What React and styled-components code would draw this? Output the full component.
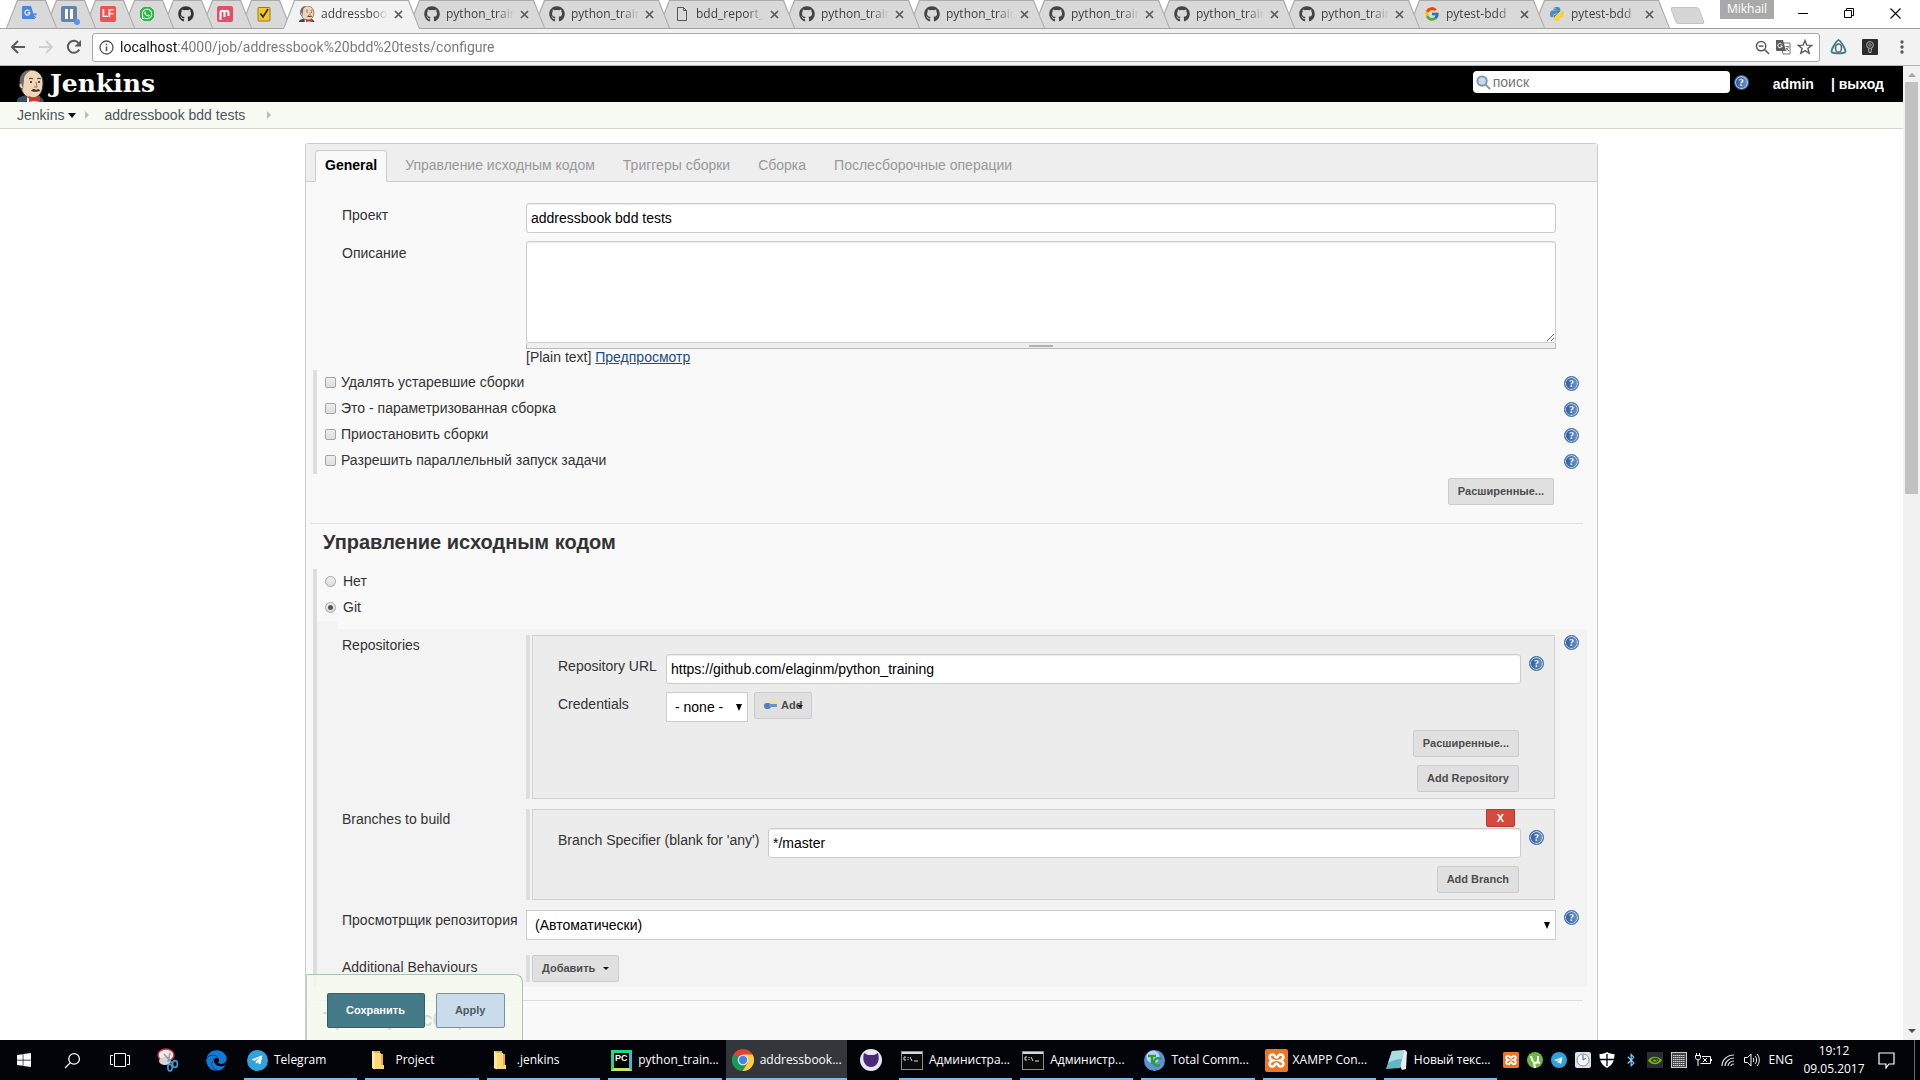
import React from "react";
import styled, { createGlobalStyle, css } from "styled-components";
import {
  FaGithub,
  FaWhatsapp,
  FaTelegramPlane,
  FaPython,
  FaWindows,
  FaEdge,
  FaBluetoothB,
} from "react-icons/fa";
import { FcGoogle } from "react-icons/fc";

const pageFont = '"Liberation Sans", Arial, Helvetica, sans-serif';
const uiFont = '"Open Sans", "Noto Sans", "Segoe UI", sans-serif';

const GlobalStyle = createGlobalStyle`
  * { box-sizing: border-box; }
  body { margin: 0; background: #fff; overflow: hidden; }
  button, input, select, textarea { font: inherit; margin: 0; }
  button { cursor: pointer; }
  svg { display: block; flex: none; }
`;

const Screen = styled.div`
  display: flex;
  flex-direction: column;
  height: 100vh;
  overflow: hidden;
`;

/* ---------- browser chrome ---------- */

const TabStrip = styled.div`
  display: flex;
  align-items: flex-end;
  height: 29px;
  padding-left: 6px;
  background: #fff;
  border-bottom: 1px solid #a3a3a3;
  font: 12px/16px ${uiFont};
`;

const TabGroup = styled.div`
  display: flex;
  align-items: flex-end;
  padding-right: ${(p) => p.$gap || 0}px;
`;

const Tab = styled.div`
  position: relative;
  z-index: ${(p) => p.$order};
  display: flex;
  align-items: center;
  gap: 6px;
  width: ${(p) => (p.$pinned ? 51 : 137)}px;
  height: ${(p) => (p.$active ? 29 : 28)}px;
  margin: 0 -12px ${(p) => (p.$active ? -1 : 0)}px 0;
  padding: ${(p) => (p.$active ? "0 17px 1px 16px" : "0 16px 0 16px")};
  &::before,
  &::after {
    content: "";
    position: absolute;
    z-index: -1;
    inset: 0;
    background: #ababab;
    clip-path: polygon(0 100%, 11px 0, calc(100% - 11px) 0, 100% 100%);
  }
  &::after {
    inset: 1px 1px 0 1px;
    background: ${(p) => (p.$active ? "#f2f2f2" : "#d9d9d9")};
  }
`;

const TabTitle = styled.span`
  flex: 1;
  min-width: 0;
  white-space: nowrap;
  color: #3f3f3f;
  mask-image: linear-gradient(90deg, #000 75%, transparent);
`;

const PlainButton = styled.button`
  display: grid;
  place-items: center;
  padding: 0;
  border: 0;
  background: none;
  color: ${(p) => p.$color || "#5a5a5a"};
`;

const PinnedTile = styled.span`
  position: relative;
  display: grid;
  place-items: center;
  width: 16px;
  height: 16px;
  border-radius: 2px;
  background: ${(p) => p.$bg || "none"};
  color: #fff;
  font: bold 10px/16px ${pageFont};
`;

const Dot = styled.i`
  position: absolute;
  right: -3px;
  bottom: -3px;
  width: 6px;
  height: 6px;
  border-radius: 50%;
  background: #5b93ee;
`;

const NewTab = styled.button`
  align-self: center;
  width: 29px;
  height: 17px;
  margin: 3px 0 0 15px;
  padding: 0;
  border: 1px solid #c4c4c4;
  border-radius: 3px;
  background: #d6d6d6;
  transform: skewX(20deg);
`;

const WindowControls = styled.div`
  display: flex;
  align-self: flex-start;
  margin: 0 2px 0 auto;
  color: #000;
`;

const Profile = styled.span`
  width: 54px;
  height: 19px;
  margin-right: 6px;
  background: #a9a9a9;
  color: #fff;
  text-align: center;
  line-height: 18px;
`;

const WindowButton = styled(PlainButton)`
  width: 46px;
  height: 26px;
  color: #000;
`;

const Toolbar = styled.div`
  display: flex;
  align-items: center;
  height: 37px;
  padding: 0 4px;
  background: #f2f2f2;
  border-bottom: 1px solid #b5b5b5;
`;

const NavButton = styled(PlainButton)`
  width: 28px;
  height: 28px;
`;

const Omnibox = styled.div`
  flex: 1;
  display: flex;
  align-items: center;
  gap: 6px;
  height: 29px;
  margin-left: 4px;
  padding: 0 6px;
  border: 1px solid #a8a8a8;
  border-radius: 3px;
  background: #fff;
`;

const Address = styled.input`
  flex: 1;
  min-width: 0;
  padding: 0;
  border: 0;
  outline: 0;
  font: 14px/20px Roboto, ${uiFont};
  color: #767676;
  background: linear-gradient(90deg, #111 57px, #767676 57px);
  background-clip: text;
  -webkit-text-fill-color: transparent;
`;

const ExtButton = styled(PlainButton)`
  width: 28px;
  height: 28px;
  margin-left: 4px;
`;

/* ---------- viewport ---------- */

const Viewport = styled.div`
  flex: 1;
  min-height: 0;
  display: flex;
`;

const Page = styled.div`
  position: relative;
  flex: 1;
  min-width: 0;
  overflow: hidden;
  background: #fff;
  font: 14px/16px ${pageFont};
  color: #333;
`;

const Scroll = styled.div`
  display: flex;
  flex-direction: column;
  align-items: center;
  justify-content: space-between;
  width: 17px;
  padding: 7px 0;
  background: #f1f1f1;
`;

const ScrollArrow = styled.i`
  border: 4px solid transparent;
  ${(p) =>
    p.$up
      ? css`
          border-top: 0;
          border-bottom-color: #a3a3a3;
        `
      : css`
          border-bottom: 0;
          border-top-color: #505050;
        `}
`;

const ScrollTrack = styled.div`
  flex: 1;
  width: 13px;
  padding-top: 5px;
`;

const ScrollThumb = styled.div`
  height: 412px;
  background: #c1c1c1;
`;

/* ---------- Jenkins header ---------- */

const Header = styled.header`
  display: flex;
  align-items: center;
  height: 36px;
  padding: 0 19px 0 17px;
  background: #000;
`;

const Logo = styled.a`
  display: flex;
  align-items: flex-end;
  gap: 5px;
  height: 36px;
  color: #fff;
  text-decoration: none;
  font: bold 25px/36px "DejaVu Serif", Georgia, serif;
`;

const SearchForm = styled.form`
  display: flex;
  align-items: center;
  gap: 4px;
  margin: 0 24px 4px auto;
`;

const SearchBox = styled.div`
  display: flex;
  align-items: center;
  gap: 2px;
  width: 257px;
  height: 22px;
  padding: 0 3px;
  border-radius: 4px;
  background: #fff;
`;

const SearchInput = styled.input`
  flex: 1;
  min-width: 0;
  padding: 0;
  border: 0;
  outline: 0;
  background: none;
  &::placeholder {
    color: #757575;
  }
`;

const UserLinks = styled.nav`
  display: flex;
  gap: 17px;
  font-weight: bold;
  color: #fff;
  a {
    color: #fff;
    text-decoration: none;
  }
`;

const Breadcrumbs = styled.nav`
  display: flex;
  align-items: center;
  height: 27px;
  padding-left: 17px;
  border-bottom: 1px solid #d3d7cf;
  background: #f6faf2;
  a {
    color: #4d545d;
    text-decoration: none;
  }
`;

const Caret = styled.i`
  display: inline-block;
  margin-left: 4px;
  border: solid transparent;
  border-width: ${(p) => (p.$small ? "3px 3px 0" : "5px 4px 0")};
  border-top-color: #111;
`;

const CrumbArrow = styled.i`
  margin: 0 ${(p) => p.$after || 0}px 0 ${(p) => p.$before}px;
  border: 4px solid transparent;
  border-right: 0;
  border-left-color: #babdb6;
`;

/* ---------- configuration form ---------- */

const Config = styled.main`
  width: calc(100% - 32px);
  max-width: 1293px;
  margin: 14px auto 0;
  border: 1px solid #ccc;
  border-radius: 3px 3px 0 0;
  background: #f9f9f9;
`;

const Tabs = styled.div`
  display: flex;
  align-items: flex-end;
  gap: 8px;
  height: 38px;
  padding-left: 9px;
  border-bottom: 1px solid #ccc;
  background: #eee;
`;

const ConfigTab = styled.button`
  height: 32px;
  margin-bottom: -1px;
  padding: 0 9px 2px;
  border: 1px solid transparent;
  border-radius: 4px 4px 0 0;
  background: none;
  color: #999;
  white-space: nowrap;
  ${(p) =>
    p.$active &&
    css`
      border-color: #ccc;
      border-bottom-color: #f9f9f9;
      background: #f9f9f9;
      color: #000;
      font-weight: bold;
    `}
`;

const Rows = styled.div`
  display: grid;
  gap: 8px;
  padding: 21px 41px 5px 36px;
`;

const Label = styled.label`
  display: block;
  padding-top: 4px;
  white-space: nowrap;
`;

const Row = styled.div`
  display: grid;
  grid-template-columns: 184px minmax(0, 1fr) ${(p) => (p.$help ? "31px" : "0")};
  align-items: start;
  margin-top: ${(p) => p.$space || 0}px;
  > ${Label} {
    padding-top: ${(p) => (p.$help && !p.$space ? 2 : 4)}px;
  }
`;

const fieldBox = css`
  width: 100%;
  border: 1px solid #ccc;
  border-radius: 3px;
  background: #fff;
  color: #000;
  outline: 0;
`;

const TextInput = styled.input`
  ${fieldBox}
  display: block;
  height: 30px;
  padding: 0 4px;
  box-shadow: inset 0 1px 1px rgba(0, 0, 0, 0.08);
`;

const TextArea = styled.textarea`
  ${fieldBox}
  display: block;
  height: 102px;
  padding: 5px;
  resize: vertical;
  box-shadow: inset 0 1px 1px rgba(0, 0, 0, 0.08);
`;

const Grip = styled.div`
  display: grid;
  place-items: center;
  height: 6px;
  border: 1px solid #bbb;
  border-top: 0;
  background: #eee;
  &::after {
    content: "";
    width: 24px;
    height: 2px;
    background: #b0b0b0;
  }
`;

const Note = styled.div`
  color: #333;
  a {
    color: #204a87;
  }
`;

const OptionBlock = styled.div`
  margin: 0 0 0 7px;
  border-left: 4px solid #ddd;
`;

const Option = styled.div`
  display: flex;
  align-items: center;
  height: 26px;
  padding: 0 18px 0 8px;
  label {
    flex: 1;
    padding-left: ${(p) => p.$gap}px;
    margin-bottom: 3px;
  }
`;

const Tick = styled.input`
  appearance: none;
  display: grid;
  place-items: center;
  width: 11px;
  height: 11px;
  margin-bottom: 2px;
  border: 1px solid #a5a5a5;
  border-radius: ${(p) => (p.type === "radio" ? "50%" : "2px")};
  background: linear-gradient(#eee, #ddd);
  &:checked::after {
    content: "";
    width: 5px;
    height: 5px;
    border-radius: 50%;
    background: #555;
  }
`;

const HelpButton = styled.button`
  display: grid;
  place-items: center;
  width: 15px;
  height: 15px;
  margin-left: ${(p) => p.$indent || 0}px;
  padding: 0;
  border: 1px solid #3565a5;
  border-radius: 50%;
  background: linear-gradient(90deg, #2d5796, #6f97cb);
  box-shadow: inset 0 0 0 1px #c4d6ee;
  color: #fff;
  font: bold 10px/13px "Liberation Serif", serif;
`;

const Actions = styled.div`
  display: flex;
  justify-content: flex-end;
  padding: ${(p) => (p.$outer ? "4px 43px 18px 0" : "0 2px 0 0")};
`;

const Button = styled.button`
  position: relative;
  display: inline-flex;
  align-items: center;
  gap: 4px;
  height: 27px;
  padding: 0 9px 1px;
  border: 1px solid #ccc;
  border-radius: 2px;
  background: #e0e0e0;
  color: #4d4d4d;
  font: bold 11px/14px ${pageFont};
  white-space: nowrap;
`;

const OverCaret = styled.span`
  position: absolute;
  right: 8px;
  top: 11px;
  line-height: 0;
`;

const Heading = styled.h2`
  margin: ${(p) => p.$space || 0}px 14px 0 4px;
  padding: 7px 0 0 13px;
  height: 46px;
  border-top: 1px solid #ddd;
  font: bold 20px/22px ${pageFont};
  color: #333;
`;

const Notch = styled.div`
  width: 21px;
  height: 8px;
  background: #f3f3f3;
`;

const GitPanel = styled.div`
  display: grid;
  gap: 10px;
  margin-right: 10px;
  padding: 6px 0 5px 25px;
  background: #f3f3f3;
`;

const Chunk = styled.div`
  margin-right: 1px;
  padding-left: 2px;
  border-left: 4px solid #ddd;
`;

const ChunkBox = styled.div`
  position: relative;
  display: grid;
  gap: 8px;
  padding: 18px 33px 6px 25px;
  border: 1px solid #d0d0d0;
  background: #ececec;
`;

const SubRow = styled.div`
  display: grid;
  grid-template-columns: ${(p) => p.$label}px minmax(0, 1fr) 15px;
  align-items: start;
  margin-right: -23px;
  ${HelpButton} {
    margin-top: 2px;
  }
`;

const SubField = styled.div`
  display: flex;
  align-items: flex-start;
  gap: 6px;
  margin-right: 8px;
`;

const DeleteButton = styled.button`
  position: absolute;
  top: -1px;
  right: 39px;
  width: 29px;
  height: 18px;
  padding: 0;
  border: 1px solid #b93a2e;
  border-radius: 0 0 2px 2px;
  background: #d54a3d;
  color: #fff;
  font: bold 11px/14px ${pageFont};
`;

const SelectWrap = styled.div`
  position: relative;
  flex: ${(p) => (p.$width ? "none" : 1)};
  width: ${(p) => (p.$width ? p.$width + "px" : "100%")};
  &::after {
    content: "";
    position: absolute;
    right: 6px;
    top: 12px;
    border: 3px solid transparent;
    border-top: 7px solid #000;
    border-bottom: 0;
    pointer-events: none;
  }
`;

const Select = styled.select`
  ${fieldBox}
  appearance: none;
  display: block;
  height: 30px;
  padding: 0 8px;
  border-radius: 0;
`;

const SaveBar = styled.div`
  position: absolute;
  left: 306px;
  bottom: 0;
  display: flex;
  gap: 11px;
  padding: 18px 17px 12px 20px;
  border: 1px solid #a9c4b4;
  border-left-color: #ccc;
  border-bottom: 0;
  border-radius: 0 8px 0 0;
  background: rgba(245, 249, 239, 0.85);
`;

const BarButton = styled.button`
  height: 35px;
  padding: 0 19px 1px 18px;
  border: 1px solid ${(p) => (p.$primary ? "#2f5f6d" : "#6f93b8")};
  border-radius: 2px;
  background: ${(p) => (p.$primary ? "#457a88" : "#cadcec")};
  color: ${(p) => (p.$primary ? "#fff" : "#4d5a66")};
  font: bold 11px/14px ${pageFont};
`;

/* ---------- taskbar ---------- */

const Taskbar = styled.footer`
  display: flex;
  height: 40px;
  background: #02040a;
  color: #fff;
  font: 12px/18px ${uiFont};
`;

const TaskIcon = styled(PlainButton)`
  flex: none;
  width: 48px;
  color: #fff;
`;

const TaskGroup = styled.div`
  display: flex;
  flex: 0 1 ${(p) => p.$width}px;
  min-width: 0;
`;

const Task = styled.button`
  position: relative;
  flex: 1;
  min-width: 0;
  display: flex;
  align-items: center;
  gap: 6px;
  padding: 0 7px 0 6px;
  border: 0;
  background: ${(p) => (p.$active ? "#33363b" : "none")};
  color: #fff;
  white-space: nowrap;
  &::after {
    content: "";
    position: absolute;
    left: ${(p) => (p.$active ? 0 : 4)}px;
    right: ${(p) => (p.$active ? 0 : 4)}px;
    bottom: 0;
    height: 2px;
    background: #76b9ed;
  }
`;

const IconSlot = styled.span`
  display: grid;
  place-items: center;
  flex: none;
  width: 22px;
`;

const Tray = styled.div`
  display: flex;
  align-items: center;
  gap: 8px;
  margin-left: auto;
  padding-right: 5px;
`;

const TraySlot = styled.span`
  display: grid;
  place-items: center;
  width: 16px;
  height: 16px;
`;

const Clock = styled.time`
  width: 66px;
  text-align: center;
`;

const Notifications = styled(PlainButton)`
  width: 40px;
  height: 40px;
  border-right: 1px solid #6b6d70;
  padding-right: 16px;
  color: #fff;
`;

/* ---------- drawings ---------- */

const Cross = () => (
  <svg width="9" height="9" viewBox="0 0 9 9" stroke="currentColor" strokeWidth="1.7">
    <path d="M1 1l7 7M8 1l-7 7" />
  </svg>
);

const Butler = ({ w = 16, h = 16 }) => (
  <svg width={w} height={h} viewBox="0 0 28 32" preserveAspectRatio="none">
    <path d="M0 32c0-3 1-5 6-6l8-1c6 0 12 1 13 7z" fill="#335061" />
    <path d="M10 23h10l2 9H10z" fill="#fff" />
    <path d="M3 13C2 4 8 0 14 0s12 4 12 13c0 9-4 15-11 15S4 22 3 13z" fill="#f0d6b7" stroke="#40332d" strokeWidth="1" />
    <path d="M3 14C2 5 7 1 14 .5 9 3 7 6 7 10l-1 9z" fill="#6d6b6d" />
    <path d="M4 13c-3 0-2 6 2 6" fill="#f0d6b7" stroke="#40332d" />
    <path d="M12 9c1-1 3-1 4 0M20 9c1-1 3-1 4 0" stroke="#40332d" fill="none" />
    <circle cx="14" cy="12" r="1" fill="#222" />
    <circle cx="22" cy="12" r="1" fill="#222" />
    <path d="M19 12l1 5h-3" stroke="#a06a50" fill="none" />
    <path d="M14 21c2-3 4-2 5-1 1-1 4-1 4 1-2 1-7 1-9 0z" fill="#40332d" />
    <path d="M12 26l5 2 6-2v6l-6-1-5 1z" fill="#d33833" />
  </svg>
);

const Arrow = ({ flip }) => (
  <svg width="16" height="14" viewBox="0 0 16 14" fill="none" stroke="currentColor" strokeWidth="2">
    <path d={flip ? "M1 7h13M8 1l6 6-6 6" : "M15 7H2M8 1L2 7l6 6"} />
  </svg>
);

const Reload = () => (
  <svg width="16" height="16" viewBox="0 0 16 16">
    <path d="M13.2 10.5A6 6 0 1 1 12.5 4" fill="none" stroke="currentColor" strokeWidth="2" />
    <path d="M15 1v6.500H8.500z" fill="currentColor" />
  </svg>
);

const Info = () => (
  <svg width="15" height="15" viewBox="0 0 15 15">
    <circle cx="7.5" cy="7.5" r="6.500" fill="none" stroke="#555" strokeWidth="1.3" />
    <path d="M6.700 6.500h1.600V11H6.700zM6.700 3.700h1.600v1.600H6.700z" fill="#555" />
  </svg>
);

const Translate = () => (
  <svg width="15" height="15" viewBox="0 0 15 15">
    <path d="M5 3h9v11H7z" fill="#fff" stroke="#777" />
    <path d="M0 0h7l3 11H1a1 1 0 0 1-1-1z" fill="#5c5c5c" />
    <path d="M6 4.500A2.200 2.200 0 1 0 6.200 6H4.300" fill="none" stroke="#fff" />
    <path d="M9.500 6.500h4M12.500 6.500c-.5 2-1.500 3-3 4.500M10 8l3 3" stroke="#777" fill="none" />
  </svg>
);

const GTranslate = () => (
  <svg width="16" height="16" viewBox="0 0 16 16">
    <path d="M6 5h9a1 1 0 0 1 1 1v9a1 1 0 0 1-1 1H9z" fill="#d5dbe6" />
    <path d="M1 0h8l4 13H1a1 1 0 0 1-1-1V1a1 1 0 0 1 1-1z" fill="#4a86e8" />
    <path d="M7.500 5.200a2.500 2.500 0 1 0 .4 1.600H5.600" stroke="#fff" fill="none" strokeWidth="1.1" />
    <path d="M10 8h5M13.500 8c-.5 2-1 3-2.500 4M12 9.500l2 2.500" stroke="#5d7fb5" fill="none" />
  </svg>
);

const Magnifier = ({ size = 16, minus, color = "#5a5a5a", flip, fill = "none", width = 1.6 }) => (
  <svg width={size} height={size} viewBox="0 0 16 16" fill="none" stroke={color} strokeWidth={width}>
    <g transform={flip ? "matrix(-1 0 0 1 16 0)" : undefined}>
      <circle cx="6.500" cy="6.500" r="5" fill={fill} />
      <path d="M10 10l5 5" />
      {minus && <path d="M4 6.500h5" />}
    </g>
  </svg>
);

const Star = () => (
  <svg width="16" height="16" viewBox="0 0 16 16" fill="none" stroke="#5a5a5a" strokeWidth="1.4">
    <path d="M8 1.500l1.800 4.600 4.900.3-3.800 3.100 1.300 4.800L8 11.600l-4.200 2.700 1.300-4.800L1.300 6.400l4.900-.3z" />
  </svg>
);

const ExtTriangle = () => (
  <svg width="17" height="16" viewBox="0 0 17 16" fill="none">
    <path d="M8.500 1C11 2 15.500 10 15.500 12.500 15 15 2 15 1.500 12.500 1.500 10 6 2 8.500 1z" stroke="#2f8196" strokeWidth="1.8" />
    <ellipse cx="8.500" cy="9" rx="3" ry="4.200" stroke="#6a6f75" strokeWidth="1.700" />
  </svg>
);

const ExtBulb = () => (
  <svg width="16" height="16" viewBox="0 0 16 16" fill="none">
    <rect width="16" height="16" rx="1" fill="#2c2c2c" />
    <circle cx="8" cy="6" r="3.400" stroke="#cfcfcf" strokeWidth=".8" />
    <circle cx="8" cy="6" r="1.300" stroke="#aaa" strokeWidth=".8" />
    <path d="M6.500 9.500l.5 4h2l.5-4" stroke="#cfcfcf" strokeWidth=".8" />
  </svg>
);

const PageIcon = () => (
  <svg width="16" height="16" viewBox="0 0 16 16" fill="none" stroke="#555">
    <path d="M3.500 1.500h6l3 3v10h-9zM9.500 1.500v3h3" />
  </svg>
);

const PythonBox = styled.span`
  display: flex;
  align-items: center;
  width: 16px;
  height: 16px;
`;

const PythonMark = () => (
  <PythonBox>
    <svg width="0" height="0" aria-hidden="true">
      <defs>
        <linearGradient id="py" x1="0" y1="0" x2="1" y2="1">
          <stop offset=".5" stopColor="#4b8bc0" />
          <stop offset=".5" stopColor="#f7cf3f" />
        </linearGradient>
      </defs>
    </svg>
    <FaPython size={16} fill="url(#py)" />
  </PythonBox>
);

const Pause = () => (
  <svg width="8" height="10" viewBox="0 0 8 10" fill="#fff">
    <path d="M0 0h3v10H0zM5 0h3v10H5z" />
  </svg>
);

const Mobi = () => (
  <svg width="12" height="12" viewBox="0 0 12 12" fill="none" stroke="#fff" strokeWidth="2">
    <path d="M1.500 12V5c0-3 4-3 4 0v4V5c0-3 4-3 4 0v3" />
  </svg>
);

const CheckTile = () => (
  <svg width="14" height="16" viewBox="0 0 14 16">
    <rect x="1" y="1.500" width="12" height="13.500" rx="1" fill="#f6c92b" stroke="#8c7a35" />
    <path d="M3.500 7.500l2.500 3.500 5-8" fill="none" stroke="#333" strokeWidth="1.800" />
  </svg>
);

const KeyIcon = () => (
  <svg width="13" height="13" viewBox="0 0 13 13">
    <circle cx="9.500" cy="4" r="3" fill="#f1e58b" />
    <rect x="0" y="4" width="7" height="6" rx="3" fill="#4f7fb5" />
    <path d="M5 5h8v3H5z" fill="#6d93bf" />
  </svg>
);

const Folder = () => (
  <svg width="14" height="20" viewBox="0 0 14 20">
    <path d="M1 1h8v3h3v15H3L1 18z" fill="#e3b04b" />
    <path d="M1 1l3 2v16.500L1 18z" fill="#ffe9a2" />
    <path d="M4 3h6v12l3 0v4H4z" fill="#fbd873" />
  </svg>
);

const Snip = () => (
  <svg width="24" height="24" viewBox="0 0 24 24" fill="none">
    <ellipse cx="10" cy="7" rx="8" ry="6" fill="#f3e9ea" stroke="#c5333c" strokeWidth="1.500" />
    <ellipse cx="9" cy="13" rx="6" ry="4" fill="#d9d4d8" />
    <path d="M8 6l8 9M14 5l-2 9" stroke="#8b98a8" strokeWidth="1.500" />
    <ellipse cx="19" cy="16" rx="2.400" ry="3.400" stroke="#3f9bd8" strokeWidth="1.600" />
    <ellipse cx="14" cy="19.500" rx="2.200" ry="3.400" stroke="#3f9bd8" strokeWidth="1.600" />
  </svg>
);

const TaskView = () => (
  <svg width="20" height="16" viewBox="0 0 20 16" fill="none" stroke="#fff">
    <path d="M4.500 1.500h11v13h-11zM3 3.500H.5v9H3M17 3.500h2.500v9H17" />
  </svg>
);

const Disc = styled.span`
  display: grid;
  place-items: center;
  width: ${(p) => p.$size}px;
  height: ${(p) => p.$size}px;
  border-radius: 50%;
  background: ${(p) => p.$bg};
  color: #fff;
`;

const PyCharm = styled.span`
  display: grid;
  width: 21px;
  height: 21px;
  border: 3px solid #21d789;
  border-right-color: #41b7d8;
  border-bottom-color: #c9e65a;
  background: #000;
  color: #fff;
  font: bold 9px/10px ${pageFont};
  text-align: center;
`;

const Chrome = () => (
  <svg width="22" height="22" viewBox="0 0 22 22">
    <circle cx="11" cy="11" r="11" fill="#db4437" />
    <path d="M11 11L1.500 5.500A11 11 0 0 0 10.500 22l5-8.500z" fill="#0f9d58" />
    <path d="M11 5.500h9.500A11 11 0 0 1 10.500 22l5.500-8.500z" fill="#ffcd40" />
    <circle cx="11" cy="11" r="5.300" fill="#f1f1f1" />
    <circle cx="11" cy="11" r="4.200" fill="#4285f4" />
  </svg>
);

const GitHubDesktop = () => (
  <svg width="22" height="22" viewBox="0 0 22 22">
    <circle cx="11" cy="11" r="11" fill="#e9e6f2" />
    <path d="M4 4l4 2h6l4-2c1 4 1 6 0 9-1 3-4 5-7 5s-6-2-7-5c-1-3-1-5 0-9z" fill="#4b2a78" />
  </svg>
);

const Console = () => (
  <svg width="22" height="19" viewBox="0 0 22 19">
    <rect x=".5" y=".5" width="21" height="18" fill="#0a0a0a" stroke="#8c8c8c" />
    <rect x="1" y="1" width="20" height="2" fill="#d9d9d9" />
    <path d="M5 6H3v3h2M7 6v1M7 8v1M9 6l2 4M13 10h4" stroke="#ddd" fill="none" />
  </svg>
);

const TotalCmd = () => (
  <svg width="21" height="21" viewBox="0 0 21 21">
    <circle cx="10.500" cy="10.500" r="10.500" fill="#5b93d6" />
    <circle cx="9" cy="7" r="6.500" fill="#d3e6f8" opacity=".8" />
    <path d="M4 6h8M8 6v8M17 9c-4-2-7 0-7 3.500s4 4 6 2" stroke="#2f9b3c" strokeWidth="2.400" fill="none" />
  </svg>
);

const Xampp = ({ size = 23 }) => (
  <svg width={size} height={size} viewBox="0 0 23 23">
    <rect width="23" height="23" rx="2" fill="#ee7623" />
    <path
      d="M8 11.500C3 10 4 5 8 5.500c2 .3 2 3 3.500 3s1.500-2.700 3.500-3c4-.5 5 4.500 0 6 5 1.500 4 6.500 0 6-2-.3-2-3-3.500-3s-1.500 2.700-3.500 3c-4 .5-5-4.500 0-6z"
      fill="none"
      stroke="#fff"
      strokeWidth="2.600"
    />
  </svg>
);

const Notepad = () => (
  <svg width="22" height="22" viewBox="0 0 22 22">
    <path d="M6 2l13-1 2 2-1 17-4 1z" fill="#e8eef0" />
    <path d="M6 2l12 0-4 17-14 1z" fill="#5fb8c4" />
    <path d="M6 2l12 0-2 8C10 10 6 12 2 14z" fill="#a8dde2" />
  </svg>
);

const Utorrent = () => (
  <svg width="16" height="16" viewBox="0 0 16 16">
    <circle cx="8" cy="8" r="8" fill="#6fb63e" />
    <path d="M4 4c1 4 1 6 4 7 2 0 3-1 3-3V4M11 8c0 3 1 3 2 3M7 11l1 5" stroke="#fff" strokeWidth="2" fill="none" />
  </svg>
);

const Dial = () => (
  <svg width="16" height="16" viewBox="0 0 16 16">
    <rect width="16" height="16" rx="2" fill="#dfe3e8" />
    <circle cx="8" cy="8" r="6" fill="#f6f8fa" stroke="#7b8ea8" />
    <path d="M8 8V3M8 8l3-2" stroke="#2d62b5" />
  </svg>
);

const Shield = () => (
  <svg width="16" height="16" viewBox="0 0 16 16">
    <path d="M8 0c2 1.500 5 2 7.500 2 0 7-2 11-7.500 14C2.500 13 .5 9 .5 2 3 2 6 1.500 8 0z" fill="#fff" />
    <path d="M8 2v12M1 7.500h14" stroke="#02040a" strokeWidth="1.300" />
  </svg>
);

const Nvidia = () => (
  <svg width="16" height="16" viewBox="0 0 16 16">
    <rect width="16" height="16" fill="#2b2f33" />
    <path d="M1 8.500C3 4 10 3 15 8c-4 6-11 5-14 .5z" fill="#76b900" />
    <path d="M4 8.500c2-3 6-3 8-.5-2 3-6 3-7 .5 1-2 3-2 5 0" fill="none" stroke="#24360a" strokeWidth="1.100" />
  </svg>
);

const GridIcon = () => (
  <svg width="16" height="16" viewBox="0 0 16 16">
    <rect x=".5" y=".5" width="15" height="15" fill="#444" stroke="#ccc" />
    <path d="M2 3.500h12M2 5.500h12M2 7.500h12M2 9.500h12M2 11.500h12M2 13.500h12" stroke="#d5d5d5" strokeDasharray="1.500 .5" />
  </svg>
);

const Power = () => (
  <svg width="17" height="14" viewBox="0 0 17 14" fill="none" stroke="#fff">
    <path d="M1.500 0v2M4.500 0v2M.5 2.500h5v2c0 3-5 3-5 0zM3 7v6M7 3.500h8.500v7H5.500M16.500 6v2M8 5l4 4M12 5l-4 4" />
  </svg>
);

const Wifi = () => (
  <svg width="14" height="13" viewBox="0 0 14 13" fill="none" stroke="#ddd" strokeWidth="1.200">
    <path d="M1 12C1 6 6 1 13 1M4 12c0-4 4-8 9-8M7 12c0-3 3-5 6-5M10 12c0-1 1-2 3-2" />
  </svg>
);

const Speaker = () => (
  <svg width="17" height="14" viewBox="0 0 17 14" fill="none" stroke="#fff">
    <path d="M.5 4.500h3l3.500-3.500v12l-3.500-3.500h-3zM9 5c1 1 1 3 0 4M11 3c2 2 2 6 0 8M13 1c3 3 3 9 0 12" />
  </svg>
);

const Bubble = () => (
  <svg width="17" height="17" viewBox="0 0 17 17" fill="none" stroke="#fff" strokeWidth="1.200">
    <path d="M1 1h15v11h-5l-3 4v-4H1z" />
  </svg>
);

/* ---------- composition ---------- */

const Help = ({ indent }) => (
  <HelpButton type="button" $indent={indent} aria-label="Справка">
    ?
  </HelpButton>
);

const pinned = [
  <GTranslate />,
  <PinnedTile $bg="#6384ad">
    <Pause />
    <Dot />
  </PinnedTile>,
  <PinnedTile $bg="#ef5350">LF</PinnedTile>,
  <PinnedTile $bg="radial-gradient(#2cb742 65%, transparent 66%)">
    <FaWhatsapp size={12} />
  </PinnedTile>,
  <FaGithub size={16} color="#333" />,
  <PinnedTile $bg="#e0506b">
    <Mobi />
  </PinnedTile>,
  <PinnedTile>
    <CheckTile />
  </PinnedTile>,
];

const git = <FaGithub size={16} color="#444" />;
const openTabs = [
  ["addressbook", <Butler />, true],
  ["python_train", git],
  ["python_train", git],
  ["bdd_report_", <PageIcon />],
  ["python_train", git],
  ["python_train", git],
  ["python_train", git],
  ["python_train", git],
  ["python_train", git],
  ["pytest-bdd", <FcGoogle size={16} />],
  ["pytest-bdd", <PythonMark />],
];

const sections = ["General", "Управление исходным кодом", "Триггеры сборки", "Сборка", "Послесборочные операции"];
const options = [
  "Удалять устаревшие сборки",
  "Это - параметризованная сборка",
  "Приостановить сборки",
  "Разрешить параллельный запуск задачи",
];

const tasksLeft = [
  [
    "Telegram",
    <Disc $size={21} $bg="#2fa3dc">
      <FaTelegramPlane size={12} />
    </Disc>,
  ],
  ["Project", <Folder />],
  [".jenkins", <Folder />],
  ["python_train...", <PyCharm>PC</PyCharm>],
  ["addressbook...", <Chrome />, true],
];
const tasksRight = [
  ["Администра...", <Console />],
  ["Администр...", <Console />],
  ["Total Comm...", <TotalCmd />],
  ["XAMPP Con...", <Xampp />],
  ["Новый текс...", <Notepad />],
];

const TaskList = ({ items, width }) => (
  <TaskGroup $width={width}>
    {items.map(([name, icon, active], i) => (
      <Task key={i} $active={active}>
        <IconSlot>{icon}</IconSlot>
        {name}
      </Task>
    ))}
  </TaskGroup>
);

export default function App() {
  return (
    <Screen>
      <GlobalStyle />
      <TabStrip>
        <TabGroup $gap={4}>
          {pinned.map((icon, i) => (
            <Tab key={i} $pinned $order={20 - i}>
              {icon}
            </Tab>
          ))}
        </TabGroup>
        <TabGroup>
          {openTabs.map(([title, icon, active], i) => (
            <Tab key={i} $active={active} $order={active ? 30 : 12 - i}>
              {icon}
              <TabTitle>{title}</TabTitle>
              <PlainButton aria-label="Закрыть">
                <Cross />
              </PlainButton>
            </Tab>
          ))}
        </TabGroup>
        <NewTab aria-label="Новая вкладка" />
        <WindowControls>
          <Profile>Mikhail</Profile>
          <WindowButton aria-label="Свернуть">
            <svg width="10" height="1" viewBox="0 0 10 1">
              <path d="M0 0h10v1H0z" />
            </svg>
          </WindowButton>
          <WindowButton aria-label="Восстановить">
            <svg width="10" height="10" viewBox="0 0 10 10" fill="none" stroke="#000">
              <path d="M.5 2.500h7v7h-7zM2.500 2.500v-2h7v7h-2" />
            </svg>
          </WindowButton>
          <WindowButton aria-label="Закрыть окно">
            <svg width="11" height="11" viewBox="0 0 11 11" stroke="#000" strokeWidth="1.100">
              <path d="M.5.5l10 10M10.500.5l-10 10" />
            </svg>
          </WindowButton>
        </WindowControls>
      </TabStrip>

      <Toolbar>
        <NavButton aria-label="Назад">
          <Arrow />
        </NavButton>
        <NavButton aria-label="Вперёд" $color="#d0d0d0">
          <Arrow flip />
        </NavButton>
        <NavButton aria-label="Обновить">
          <Reload />
        </NavButton>
        <Omnibox>
          <Info />
          <Address aria-label="Адрес" defaultValue="localhost:4000/job/addressbook%20bdd%20tests/configure" />
          <Magnifier size={15} minus />
          <Translate />
          <Star />
        </Omnibox>
        <ExtButton aria-label="Расширение">
          <ExtTriangle />
        </ExtButton>
        <ExtButton aria-label="Подсказки">
          <ExtBulb />
        </ExtButton>
        <ExtButton aria-label="Меню">
          <svg width="4" height="14" viewBox="0 0 4 14" fill="#5a5a5a">
            <circle cx="2" cy="2" r="1.700" />
            <circle cx="2" cy="7" r="1.700" />
            <circle cx="2" cy="12" r="1.700" />
          </svg>
        </ExtButton>
      </Toolbar>

      <Viewport>
        <Page>
          <Header>
            <Logo href="#home">
              <Butler w={28} h={32} />
              Jenkins
            </Logo>
            <SearchForm>
              <SearchBox>
                <Magnifier size={15} color="#7d93ab" fill="#c6dbef" width={2} />
                <SearchInput aria-label="поиск" placeholder="поиск" />
              </SearchBox>
              <Help />
            </SearchForm>
            <UserLinks>
              <a href="#admin">admin</a>
              <span>
                | <a href="#logout">выход</a>
              </span>
            </UserLinks>
          </Header>
          <Breadcrumbs>
            <a href="#home">Jenkins</a>
            <Caret />
            <CrumbArrow $before={9} $after={15} />
            <a href="#job">addressbook bdd tests</a>
            <CrumbArrow $before={22} />
          </Breadcrumbs>

          <Config>
            <Tabs>
              {sections.map((name, i) => (
                <ConfigTab key={name} type="button" $active={i === 0}>
                  {name}
                </ConfigTab>
              ))}
            </Tabs>

            <Rows>
              <Row>
                <Label htmlFor="project">Проект</Label>
                <TextInput id="project" defaultValue="addressbook bdd tests" />
              </Row>
              <Row>
                <Label htmlFor="about">Описание</Label>
                <div>
                  <TextArea id="about" />
                  <Grip />
                  <Note>
                    [Plain text] <a href="#preview">Предпросмотр</a>
                  </Note>
                </div>
              </Row>
            </Rows>

            <OptionBlock>
              {options.map((text, i) => (
                <Option key={text} $gap={5}>
                  <Tick type="checkbox" id={`opt${i}`} />
                  <label htmlFor={`opt${i}`}>{text}</label>
                  <Help />
                </Option>
              ))}
            </OptionBlock>
            <Actions $outer>
              <Button type="button">Расширенные...</Button>
            </Actions>

            <Heading>Управление исходным кодом</Heading>
            <OptionBlock>
              <Option $gap={7}>
                <Tick type="radio" name="scm" id="scm-none" />
                <label htmlFor="scm-none">Нет</label>
              </Option>
              <Option $gap={7}>
                <Tick type="radio" name="scm" id="scm-git" defaultChecked />
                <label htmlFor="scm-git">Git</label>
              </Option>
              <Notch />
              <GitPanel>
                <Row $help>
                  <Label as="span">Repositories</Label>
                  <Chunk>
                    <ChunkBox>
                      <SubRow $label={108}>
                        <Label htmlFor="url">Repository URL</Label>
                        <SubField>
                          <TextInput id="url" defaultValue="https://github.com/elaginm/python_training" />
                        </SubField>
                        <Help />
                      </SubRow>
                      <SubRow $label={108}>
                        <Label htmlFor="cred">Credentials</Label>
                        <SubField>
                          <SelectWrap $width={82}>
                            <Select id="cred">
                              <option>- none -</option>
                            </Select>
                          </SelectWrap>
                          <Button type="button">
                            <KeyIcon />
                            <span>Add</span>
                            <OverCaret>
                              <Caret $small />
                            </OverCaret>
                          </Button>
                        </SubField>
                      </SubRow>
                      <Actions>
                        <Button type="button">Расширенные...</Button>
                      </Actions>
                      <Actions>
                        <Button type="button">Add Repository</Button>
                      </Actions>
                    </ChunkBox>
                  </Chunk>
                  <Help indent={8} />
                </Row>

                <Row $help>
                  <Label as="span">Branches to build</Label>
                  <Chunk>
                    <ChunkBox>
                      <DeleteButton type="button">X</DeleteButton>
                      <SubRow $label={210}>
                        <Label htmlFor="branch">Branch Specifier (blank for 'any')</Label>
                        <SubField>
                          <TextInput id="branch" defaultValue="*/master" />
                        </SubField>
                        <Help />
                      </SubRow>
                      <Actions>
                        <Button type="button">Add Branch</Button>
                      </Actions>
                    </ChunkBox>
                  </Chunk>
                </Row>

                <Row $help>
                  <Label htmlFor="browser">Просмотрщик репозитория</Label>
                  <SelectWrap>
                    <Select id="browser">
                      <option>(Автоматически)</option>
                    </Select>
                  </SelectWrap>
                  <Help indent={8} />
                </Row>

                <Row $help $space={5}>
                  <Label as="span">Additional Behaviours</Label>
                  <Chunk>
                    <Button type="button">
                      Добавить
                      <Caret $small />
                    </Button>
                  </Chunk>
                </Row>
              </GitPanel>
            </OptionBlock>
            <Heading $space={13}>Триггеры сборки</Heading>
          </Config>

          <SaveBar>
            <BarButton type="button" $primary>
              Сохранить
            </BarButton>
            <BarButton type="button">Apply</BarButton>
          </SaveBar>
        </Page>
        <Scroll>
          <ScrollArrow $up />
          <ScrollTrack>
            <ScrollThumb />
          </ScrollTrack>
          <ScrollArrow />
        </Scroll>
      </Viewport>

      <Taskbar>
        <TaskIcon aria-label="Пуск">
          <FaWindows size={16} />
        </TaskIcon>
        <TaskIcon aria-label="Поиск">
          <Magnifier size={17} color="#fff" flip width={1.2} />
        </TaskIcon>
        <TaskIcon aria-label="Представление задач">
          <TaskView />
        </TaskIcon>
        <TaskIcon aria-label="Ножницы">
          <Snip />
        </TaskIcon>
        <TaskIcon aria-label="Edge">
          <FaEdge size={21} color="#0e7bd8" />
        </TaskIcon>
        <TaskList items={tasksLeft} width={607} />
        <TaskIcon aria-label="GitHub">
          <GitHubDesktop />
        </TaskIcon>
        <TaskList items={tasksRight} width={606} />
        <Tray>
          <Xampp size={16} />
          <Utorrent />
          <Disc $size={16} $bg="#2fa3dc">
            <FaTelegramPlane size={9} />
          </Disc>
          <Dial />
          <Shield />
          <TraySlot>
            <FaBluetoothB size={14} color="#8fd0ff" />
          </TraySlot>
          <Nvidia />
          <GridIcon />
          <Power />
          <TraySlot>
            <Wifi />
          </TraySlot>
          <Speaker />
          <span>ENG</span>
          <Clock>
            19:12
            <br />
            09.05.2017
          </Clock>
          <Notifications aria-label="Уведомления">
            <Bubble />
          </Notifications>
        </Tray>
      </Taskbar>
    </Screen>
  );
}
